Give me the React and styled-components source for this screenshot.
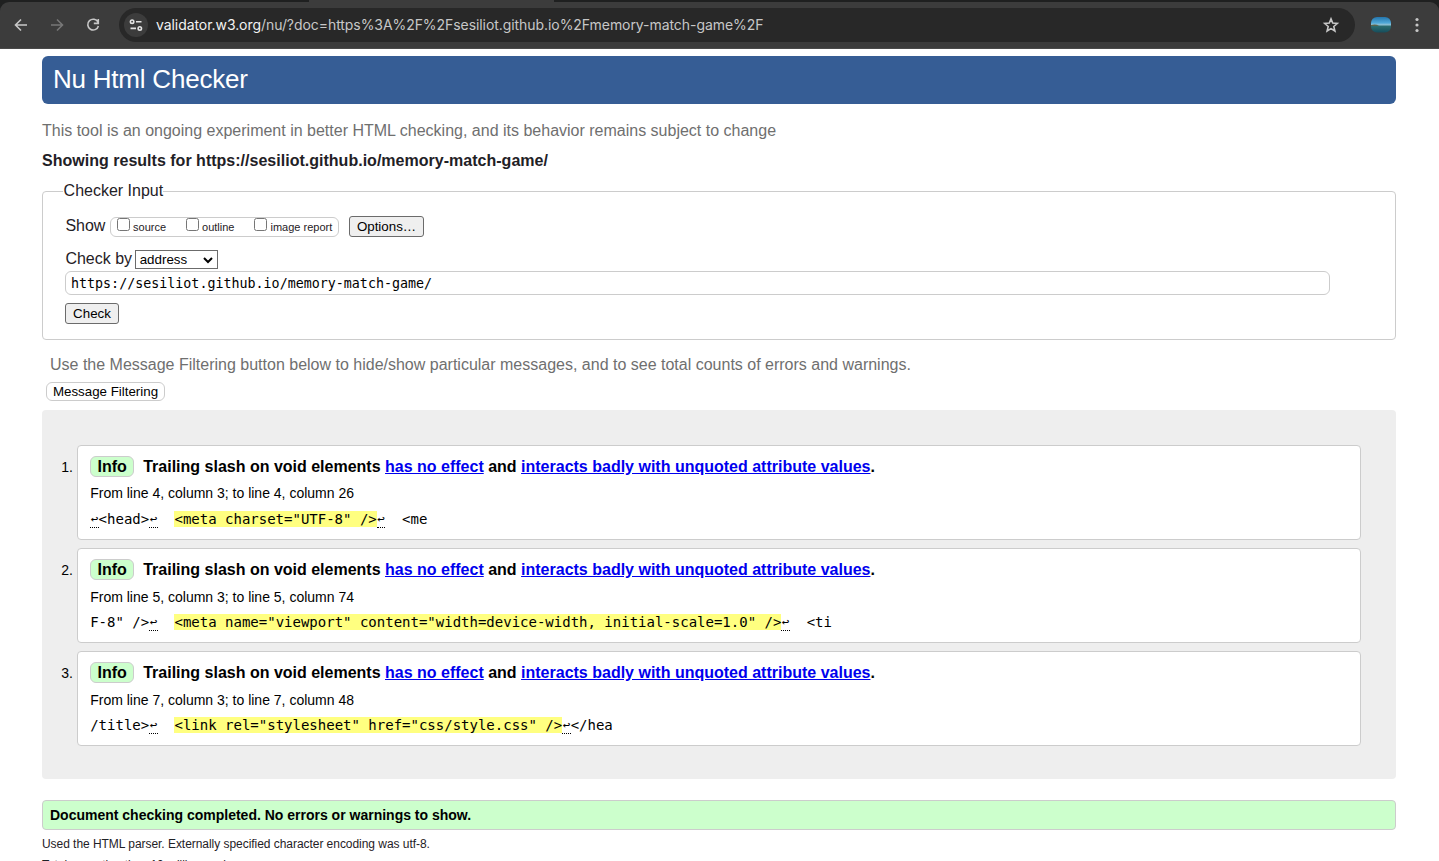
import React from "react";
import styled, { createGlobalStyle } from "styled-components";

const Global = createGlobalStyle`
  * { box-sizing: border-box; }
  html, body { margin: 0; background: #fff; overflow: hidden; }
  body { font-family: "Liberation Sans", Arial, sans-serif; color: #1f2126; }
`;

const Screen = styled.div`
  width: 1439px;
  height: 861px;
  overflow: hidden;
`;

const Browser = styled.header`
  height: 49px;
  padding-top: 2px;
  background: linear-gradient(90deg, #1f2020 0 309px, #3c3c3c 309px 554px, #1f2020 554px);
`;

const Toolbar = styled.div`
  height: 47px;
  display: flex;
  align-items: center;
  padding: 0 13px 0 12px;
  background: #3c3c3c;
  border-radius: 9px 9px 0 0;
  border-bottom: 1px solid #4a4a4a;
`;

const ToolIcon = styled.svg`
  display: block;
  flex: none;
  width: 18px;
  height: 18px;
  margin-right: ${(p) => p.$gap || 0}px;
  fill: none;
  stroke: ${(p) => p.$color || "#c7c7c7"};
  stroke-width: 1.6;
`;

const AddressBar = styled.div`
  flex: 1;
  height: 34px;
  display: flex;
  align-items: center;
  padding: 0 15px 0 5px;
  border-radius: 17px;
  background: #282828;
`;

const SiteInfo = styled.span`
  width: 24px;
  height: 24px;
  border-radius: 50%;
  background: #3c3c3c;
  display: grid;
  place-items: center;
  margin-right: 8px;
`;

const Url = styled.span`
  flex: 1;
  font: 14px/20px Inter, sans-serif;
  letter-spacing: -0.065px;
  color: #c7c7c7;
  white-space: nowrap;
  b { font-weight: 400; color: #f2f2f2; }
`;

const Avatar = styled.svg`
  display: block;
  flex: none;
  width: 20px;
  height: 16px;
  margin: 0 17px 0 16px;
`;

const Page = styled.main`
  margin: 7px 43px 0 42px;
`;

const Title = styled.h1`
  margin: 0;
  height: 48px;
  padding-left: 11px;
  border-radius: 6px;
  background: #365d95;
  color: #fff;
  font-size: 26px;
  font-weight: 400;
  letter-spacing: -0.22px;
  line-height: 47px;
`;

const Note = styled.p`
  margin: ${(p) => p.$margin};
  font-size: 16px;
  line-height: 20px;
  color: #6f6f6f;
`;

const Subject = styled.h2`
  margin: 10px 0 0;
  font-size: 16px;
  line-height: 20px;
  letter-spacing: 0.015px;
`;

const InputPanel = styled.fieldset`
  margin: 10px 0 0;
  height: 159px;
  border: 1px solid #ccc;
  border-radius: 4px;
  padding: 0 22px;
  min-width: 0;
`;

const Legend = styled.legend`
  padding: 0 0 0 0.6px;
  margin-left: -2px;
  font-size: 16px;
  line-height: 20px;
`;

const FormRow = styled.div`
  display: flex;
  align-items: flex-start;
  height: ${(p) => p.$height}px;
  margin-top: ${(p) => p.$top || 0}px;
  font-size: 16px;
  line-height: 20px;
`;

const FieldName = styled.span`
  margin: 0 -0.4px 0 0.4px;
`;

const CheckGroup = styled.div`
  display: flex;
  gap: 20px;
  width: 229px;
  height: 20px;
  margin: 1px 10px 0 5px;
  padding-left: 6px;
  border: 1px solid #ccc;
  border-radius: 6px;
`;

const CheckLabel = styled.label`
  display: flex;
  font-size: 11px;
  line-height: 18px;
  white-space: nowrap;
  input { width: 13px; height: 13px; margin: 0 3px 0 0; }
`;

const PushButton = styled.button`
  height: 21px;
  width: ${(p) => p.$width}px;
  margin: ${(p) => p.$top || 0}px 0 0;
  padding: 0;
  border: 1px solid #6b6b6b;
  border-radius: 3px;
  background: #efefef;
  color: #000;
  font: 13.333px/18px "Liberation Sans", Arial, sans-serif;
`;

const Select = styled.span`
  display: flex;
  align-items: center;
  justify-content: space-between;
  width: 83px;
  height: 19px;
  margin: 1px 0 0 3px;
  padding: 0 4px;
  border: 1px solid #6b6b6b;
  font-size: 13.333px;
  line-height: 17px;
  color: #000;
`;

const AddressInput = styled.input`
  display: block;
  width: 1265px;
  height: 24px;
  margin: 1px 0 8px;
  padding: 0 5px;
  border: 1px solid #ccc;
  border-radius: 6px;
  color: #000;
  font: 13.3333px "DejaVu Sans Mono", monospace;
`;

const FilterButton = styled.button`
  display: block;
  width: 119px;
  height: 19px;
  margin: 7px 0 9px 4px;
  padding: 0;
  border: 1px solid #ccc;
  border-radius: 6px;
  background: #fff;
  color: #000;
  font: 13.333px/16px "Liberation Sans", Arial, sans-serif;
`;

const Results = styled.ol`
  display: flex;
  flex-direction: column;
  gap: 8px;
  height: 369px;
  margin: 0;
  padding: 35px 35px 0 15px;
  border-radius: 4px;
  background: #eee;
  list-style: none;
  color: #000;
`;

const Result = styled.li`
  display: flex;
`;

const Ordinal = styled.span`
  width: 20px;
  padding: 12px 4px 0 0;
  text-align: right;
  font-size: 14px;
  line-height: 20px;
`;

const Card = styled.div`
  flex: 1;
  height: 95px;
  padding: 10px 12px 0 12.2px;
  border: 1px solid #ccc;
  border-radius: 4px;
  background: #fff;
`;

const Message = styled.p`
  display: flex;
  margin: 0;
  height: 21px;
  font-size: 16px;
  font-weight: 700;
  line-height: 22px;
  white-space: pre;
  a { color: #0000ee; text-decoration: underline; }
`;

const Badge = styled.span`
  width: 44px;
  height: 21px;
  margin-right: 9px;
  border: 1px solid #ccc;
  border-radius: 6px;
  background: #cfc;
  text-align: center;
  line-height: 20px;
`;

const Location = styled.p`
  margin: ${(p) => p.$top}px 0 0;
  font-size: 14px;
  line-height: 20px;
`;

const Extract = styled.code`
  display: block;
  margin-top: ${(p) => p.$top}px;
  font: 14px/16px "DejaVu Sans Mono", monospace;
  white-space: pre;
  mark { background: #ffff80; color: inherit; }
`;

const NewLine = styled.span`
  display: inline-flex;
  width: 8.43px;
  height: 17px;
  vertical-align: top;
  align-items: center;
  justify-content: center;
  border-bottom: 1px dotted #000;
  font-size: 12.5px;
`;

const Success = styled.p`
  margin: 21px 0 0;
  height: 30px;
  padding-left: 7px;
  border: 1px solid #ccc;
  border-radius: 4px;
  background: #cfc;
  color: #000;
  font-size: 14px;
  font-weight: 700;
  line-height: 28px;
`;

const Detail = styled.p`
  margin: ${(p) => p.$top}px 0 0;
  font-size: 12px;
  line-height: 16px;
  letter-spacing: -0.045px;
`;

const nl = Symbol("newline");

const results = [
  { where: "From line 4, column 3; to line 4, column 26", before: [nl, "<head>", nl, "  "], hit: '<meta charset="UTF-8" />', after: [nl, "  <me"], gaps: [6, 8] },
  { where: "From line 5, column 3; to line 5, column 74", before: ['F-8" />', nl, "  "], hit: '<meta name="viewport" content="width=device-width, initial-scale=1.0" />', after: [nl, "  <ti"], gaps: [7, 7] },
  { where: "From line 7, column 3; to line 7, column 48", before: ["/title>", nl, "  "], hit: '<link rel="stylesheet" href="css/style.css" />', after: [nl, "</hea"], gaps: [7, 7] },
];

const Source = ({ parts }) =>
  parts.map((part, i) => (part === nl ? <NewLine key={i}>↩</NewLine> : <React.Fragment key={i}>{part}</React.Fragment>));

export default function App() {
  return (
    <Screen>
      <Global />
      <Browser>
        <Toolbar>
          <ToolIcon viewBox="0 0 18 18" $gap={18}><path d="M15 9H4M9 3.5 3.5 9 9 14.5" /></ToolIcon>
          <ToolIcon viewBox="0 0 18 18" $gap={18} $color="#777"><path d="M3 9h11M9 3.5 14.5 9 9 14.5" /></ToolIcon>
          <ToolIcon viewBox="0 0 18 18" $gap={17}><path d="M14 6.2A5.4 5.4 0 1 0 14.4 10M14.3 3v4.4H9.8" /></ToolIcon>
          <AddressBar>
            <SiteInfo>
              <ToolIcon viewBox="0 0 18 18" $color="#e3e3e3">
                <circle cx="5.1" cy="5.7" r="1.7" /><path d="M9 5.7h5.5M3.5 12.4H9" /><circle cx="12.8" cy="12.4" r="1.7" />
              </ToolIcon>
            </SiteInfo>
            <Url><b>validator.w3.org</b>/nu/?doc=https%3A%2F%2Fsesiliot.github.io%2Fmemory-match-game%2F</Url>
            <ToolIcon viewBox="0 0 18 18">
              <path d="m9 2.9 1.7 4.2 4.6.4-3.5 3 1.1 4.5L9 12.6 5.1 15l1.1-4.5-3.5-3 4.6-.4z" />
            </ToolIcon>
          </AddressBar>
          <Avatar viewBox="0 0 20 16">
            <defs>
              <linearGradient id="lake" x1="0" y1="0" x2="0" y2="1">
                <stop offset="0" stopColor="#2476ad" />
                <stop offset=".38" stopColor="#4fa8d8" />
                <stop offset=".5" stopColor="#8fc0d4" />
                <stop offset=".6" stopColor="#2b6c70" />
                <stop offset="1" stopColor="#164d5c" />
              </linearGradient>
            </defs>
            <rect width="20" height="15.5" rx="6" fill="url(#lake)" />
            <path d="M0 8q4-1 8 .2l-2 .8H0z" fill="#5b644b" />
          </Avatar>
          <ToolIcon viewBox="0 0 18 18" $color="none">
            <g fill="#c7c7c7"><circle cx="9" cy="3.5" r="1.6" /><circle cx="9" cy="9" r="1.6" /><circle cx="9" cy="14.5" r="1.6" /></g>
          </ToolIcon>
        </Toolbar>
      </Browser>
      <Page>
        <Title>Nu Html Checker</Title>
        <Note $margin="17px 0 0">This tool is an ongoing experiment in better HTML checking, and its behavior remains subject to change</Note>
        <Subject>Showing results for https://sesiliot.github.io/memory-match-game/</Subject>
        <InputPanel>
          <Legend>Checker Input</Legend>
          <FormRow $height={22} $top={15}>
            <FieldName>Show</FieldName>
            <CheckGroup>
              <CheckLabel><input type="checkbox" />source</CheckLabel>
              <CheckLabel><input type="checkbox" />outline</CheckLabel>
              <CheckLabel><input type="checkbox" />image report</CheckLabel>
            </CheckGroup>
            <PushButton $width={75}>Options…</PushButton>
          </FormRow>
          <FormRow $height={21} $top={11}>
            <FieldName>Check by</FieldName>
            <Select>
              address
              <svg width="10" height="8" viewBox="0 0 10 8" fill="none" stroke="#000" strokeWidth="2"><path d="m1 2 4 4 4-4" /></svg>
            </Select>
          </FormRow>
          <AddressInput defaultValue="https://sesiliot.github.io/memory-match-game/" spellCheck={false} />
          <PushButton $width={54}>Check</PushButton>
        </InputPanel>
        <Note $margin="15px 0 0 8px">Use the Message Filtering button below to hide/show particular messages, and to see total counts of errors and warnings.</Note>
        <FilterButton>Message Filtering</FilterButton>
        <Results>
          {results.map((r, i) => (
            <Result key={r.where}>
              <Ordinal>{i + 1}.</Ordinal>
              <Card>
                <Message>
                  <Badge>Info</Badge>
                  <span>Trailing slash on void elements <a>has no effect</a> and <a>interacts badly with unquoted attribute values</a>.</span>
                </Message>
                <Location $top={r.gaps[0]}>{r.where}</Location>
                <Extract $top={r.gaps[1]}>
                  <Source parts={r.before} /><mark>{r.hit}</mark><Source parts={r.after} />
                </Extract>
              </Card>
            </Result>
          ))}
        </Results>
        <Success>Document checking completed. No errors or warnings to show.</Success>
        <Detail $top={6}>Used the HTML parser. Externally specified character encoding was utf-8.</Detail>
        <Detail $top={5}>Total execution time 10 milliseconds.</Detail>
      </Page>
    </Screen>
  );
}
